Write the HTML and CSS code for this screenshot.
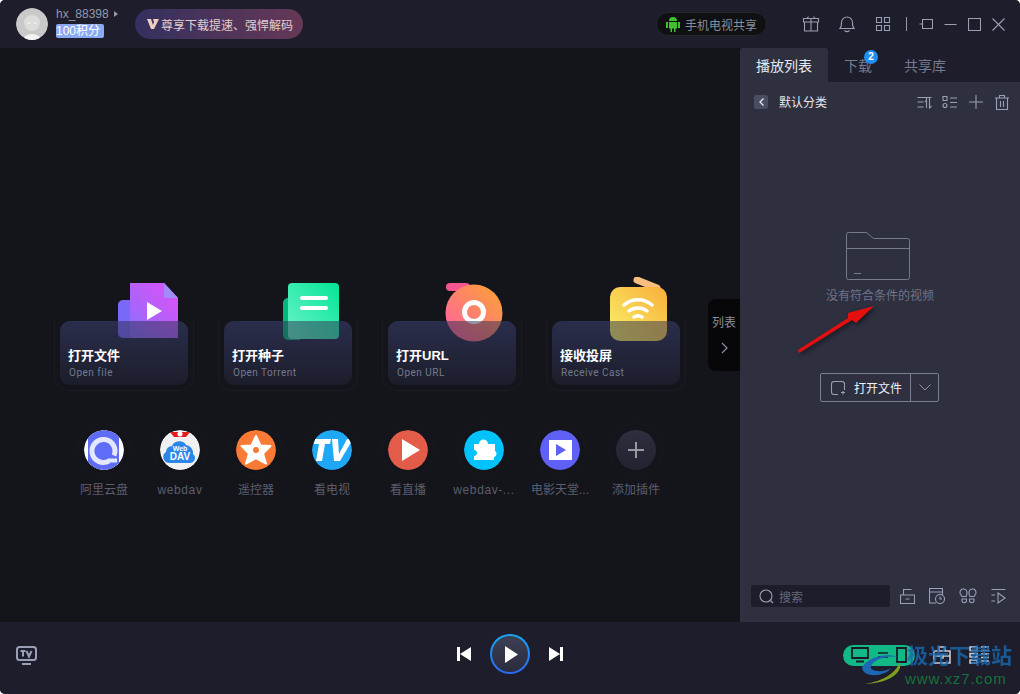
FILE: index.html
```html
<!DOCTYPE html>
<html lang="zh">
<head>
<meta charset="utf-8">
<title>Player</title>
<link rel="stylesheet" href="styles.css">
</head>
<body>
<div class="app">
  <header class="topbar">
    <div class="avatar">
      <svg viewBox="0 0 32 32" width="32" height="32"><circle cx="16" cy="16" r="16" fill="#c9c9c9"/><circle cx="16" cy="15" r="8" fill="#dcdcdc"/><ellipse cx="16" cy="32" rx="9" ry="6" fill="#f4f4f4"/><circle cx="13" cy="15" r="1" fill="#f6f6f6"/><circle cx="19" cy="15" r="1" fill="#f6f6f6"/></svg>
    </div>
    <div class="user">
      <div class="user-name">hx_88398<span class="caret"></span></div>
      <div class="points">100积分</div>
    </div>
    <div class="vip"><svg width="12" height="10" viewBox="0 0 12 10"><path d="M0 0h4l2 6 1-3-1-3h6L7 10H4z" fill="#f0cfc0"/></svg><span>尊享下载提速、强悍解码</span></div>
    <div class="spacer"></div>
    <div class="share">
      <svg width="14" height="16" viewBox="0 0 14 16"><path d="M3 5a4 4 0 0 1 8 0zM3 6h8v6.500H9.500V16h-1.500v-3.500H6V16H4.500v-3.500H3zM0 6h2v6H0zM12 6h2v6h-2z" fill="#3fc22e"/></svg>
      <span>手机电视共享</span>
    </div>
    <div class="win-icons">
      <svg class="ic" width="18" height="18" viewBox="0 0 18 18"><path d="M1.500 3.500h15v3.500h-15zM2.500 7v9h13V7M9 3.500V16M5 3.500 6.500 1.500M13 3.500 11.500 1.500" /></svg>
      <svg class="ic gap-bell" width="18" height="18" viewBox="0 0 18 18"><path d="M2 13.500c1.500-1.500 1.500-3 1.500-6a5.500 5.500 0 0 1 11 0c0 3 0 4.500 1.500 6zM6.500 15.500c1.500 1.500 3.500 1.500 5 0"/></svg>
      <svg class="ic gap-grid" width="16" height="16" viewBox="0 0 16 16"><path d="M1.500 1.500h5v5h-5zM9.500 1.500h5v5h-5zM1.500 9.500h5v5h-5zM9.500 9.500h5v5h-5z"/></svg>
      <span class="sep"></span>
      <svg class="ic gap-pin" width="14" height="14" viewBox="0 0 14 14"><path d="M.5 7h3M3.500 2.500h10v9h-10z"/></svg>
      <svg class="ic" width="13" height="13" viewBox="0 0 13 13"><path d="M.5 6.500h12"/></svg>
      <svg class="ic" width="13" height="13" viewBox="0 0 13 13"><path d="M.5.500h12v12H.5z"/></svg>
      <svg class="ic" width="13" height="13" viewBox="0 0 13 13"><path d="M.5.500l12 12M12.500.500l-12 12"/></svg>
    </div>
  </header>

  <div class="middle">
    <main class="stage">
      <div class="cards">
        <div class="card-wrap"><div class="card">
          <svg class="card-art" width="62" height="58" viewBox="0 0 62 58"><defs><linearGradient id="g1" x1="0" y1="1" x2="1" y2="0"><stop offset="0" stop-color="#8a70ff"/><stop offset="1" stop-color="#e24ff5"/></linearGradient></defs><path d="M5 18h15v38H5a5 5 0 0 1-5-5V23a5 5 0 0 1 5-5z" fill="#7a68f6"/><path d="M12 1h34l14 15v40H12z" fill="url(#g1)"/><path d="M46 1l14 15H48a2 2 0 0 1-2-2z" fill="#a08cf8"/><path d="M29 20l15 9-15 9z" fill="#fff"/></svg>
          <div class="card-glass"></div>
          <div class="card-title">打开文件</div><div class="card-sub">Open file</div>
        </div></div>
        <div class="card-wrap"><div class="card">
          <svg class="card-art art2" width="58" height="60" viewBox="0 0 58 60"><defs><linearGradient id="g2" x1="0" y1="1" x2="1" y2="0"><stop offset="0" stop-color="#6df3cd"/><stop offset="1" stop-color="#04e594"/></linearGradient></defs><path d="M6 16h12v42H6a5 5 0 0 1-5-5V21a5 5 0 0 1 5-5z" fill="#04b87c"/><rect x="6" y="1" width="51" height="56" rx="4" fill="url(#g2)"/><rect x="18" y="14" width="28" height="4" rx="2" fill="#fff"/><rect x="18" y="24" width="28" height="4" rx="2" fill="#fff"/></svg>
          <div class="card-glass"></div>
          <div class="card-title">打开种子</div><div class="card-sub">Open Torrent</div>
        </div></div>
        <div class="card-wrap"><div class="card">
          <svg class="card-art art3" width="58" height="60" viewBox="0 0 58 60"><defs><linearGradient id="g3" x1="0" y1="1" x2="1" y2="0"><stop offset="0" stop-color="#ff5fa8"/><stop offset="1" stop-color="#fba52e"/></linearGradient></defs><rect x="1" y="1" width="24" height="8" rx="4" fill="#f4568f"/><circle cx="29" cy="31" r="28.500" fill="url(#g3)"/><circle cx="29" cy="30" r="9.500" fill="none" stroke="#fff" stroke-width="5"/></svg>
          <div class="card-glass"></div>
          <div class="card-title">打开URL</div><div class="card-sub">Open URL</div>
        </div></div>
        <div class="card-wrap"><div class="card">
          <svg class="card-art art4" width="58" height="64" viewBox="0 0 58 64"><defs><linearGradient id="g4" x1="0" y1="1" x2="1" y2="0"><stop offset="0" stop-color="#f8f268"/><stop offset="1" stop-color="#f9ae3c"/></linearGradient></defs><path d="M28 3l20 8" stroke="#f9bd7d" stroke-width="7" stroke-linecap="round"/><rect x="1" y="10" width="57" height="54" rx="10" fill="url(#g4)"/><g fill="none" stroke="#fff" stroke-width="3.500" stroke-linecap="round"><path d="M15 28c8-7 20-7 28 0"/><path d="M20 34c5-4 13-4 18 0"/><path d="M25 40c3-2 5-2 8 0"/></g></svg>
          <div class="card-glass"></div>
          <div class="card-title">接收投屏</div><div class="card-sub">Receive Cast</div>
        </div></div>
      </div>

      <div class="plugins">
        <div class="plugin"><div class="ring"><svg width="40" height="40" viewBox="0 0 40 40"><circle cx="20" cy="20" r="20" fill="#fff"/><path d="M4 8a20 20 0 0 1 31-1v26a20 20 0 0 1-31-1z" fill="#5f6cf5"/><path d="M30 25.500a11.500 11.500 0 1 0-5 5.500" fill="none" stroke="#e3e7ff" stroke-width="5"/><path d="M24 30.500h9" stroke="#e3e7ff" stroke-width="4"/></svg></div><div class="plugin-name">阿里云盘</div></div>
        <div class="plugin"><div class="ring"><svg width="40" height="40" viewBox="0 0 40 40"><circle cx="20" cy="20" r="20" fill="#f1f1f1"/><path d="M10 2h20l-4 5H14z" fill="#e51c1c"/><circle cx="20" cy="4" r="2.500" fill="#fff"/><path d="M9 33a6 6 0 0 1-3-11 6 6 0 0 1 6-6c2-6 12-6 14-1a8 8 0 0 1 7 9 5 5 0 0 1-3 9z" fill="#2a86e8"/><text x="20" y="21" class="dav-s">Web</text><text x="20" y="30" class="dav-l">DAV</text></svg></div><div class="plugin-name">webdav</div></div>
        <div class="plugin"><div class="ring"><svg width="40" height="40" viewBox="0 0 40 40"><circle cx="20" cy="20" r="20" fill="#f97a35"/><path d="M20 6l4.500 9.500 10 .5-7.500 7.500 3 10-10-5.500-10 5.500 3-10-7.500-7.500 10-.5z" fill="#fff" stroke="#fff" stroke-width="2" stroke-linejoin="round"/><circle cx="20" cy="20" r="3" fill="#f97a35"/></svg></div><div class="plugin-name">遥控器</div></div>
        <div class="plugin"><div class="ring"><svg width="40" height="40" viewBox="0 0 40 40"><circle cx="20" cy="20" r="20" fill="#1ea8f5"/><path d="M3 9h16l-1 5h-5l-3 17H4l3-17H2zM20 9h6l1 15 8-15h6L28 31h-6z" fill="#fff"/></svg></div><div class="plugin-name">看电视</div></div>
        <div class="plugin"><div class="ring"><svg width="40" height="40" viewBox="0 0 40 40"><circle cx="20" cy="20" r="20" fill="#e35c4a"/><path d="M14 9l18 11-18 11z" fill="#fff"/></svg></div><div class="plugin-name">看直播</div></div>
        <div class="plugin"><div class="ring"><svg width="40" height="40" viewBox="0 0 40 40"><circle cx="20" cy="20" r="20" fill="#00c3fb"/><path d="M10 14h5c0-6 9-6 9 0h7v7c3 2 1 6-1 6v3H10v-4c4 0 4-6 0-6z" fill="#fff"/></svg></div><div class="plugin-name">webdav-...</div></div>
        <div class="plugin"><div class="ring"><svg width="40" height="40" viewBox="0 0 40 40"><circle cx="20" cy="20" r="20" fill="#5f60f6"/><rect x="9" y="10" width="23" height="20" fill="#fff"/><path d="M16 14l10 6-10 6z" fill="#5f60f6"/></svg></div><div class="plugin-name">电影天堂...</div></div>
        <div class="plugin"><div class="ring add"><svg width="16" height="16" viewBox="0 0 16 16"><path d="M8 0v16M0 8h16" stroke="#9a9aa2" stroke-width="2"/></svg></div><div class="plugin-name">添加插件</div></div>
      </div>

      <div class="list-handle"><span>列表</span><svg width="7" height="12" viewBox="0 0 7 12"><path d="M1 1l5 5-5 5" fill="none" stroke="#8b90a6" stroke-width="1.200"/></svg></div>
    </main>

    <aside class="panel">
      <nav class="tabs">
        <div class="tab active">播放列表</div>
        <div class="tab">下载<span class="badge">2</span></div>
        <div class="tab">共享库</div>
      </nav>
      <div class="panel-body">
        <div class="crumb">
          <span class="back"><svg width="5" height="8" viewBox="0 0 5 8"><path d="M4.500.500 1 4l3.500 3.500" fill="none" stroke="#e4e6ee" stroke-width="1.300"/></svg></span>
          <span class="crumb-title">默认分类</span>
          <span class="crumb-tools">
            <svg class="ic tool-first" width="15" height="15" viewBox="0 0 15 15"><path d="M.5 2.500h14M.5 7h6M.5 12h6M9.500 2.500V13M9.500 5 8 7M12.500 2.500V13l2-2"/></svg>
            <svg class="ic" width="15" height="15" viewBox="0 0 15 15"><path d="M1 1.500h4v4H1zM8 3h7M8 7.500h7M8 12h7"/><circle cx="3" cy="10.500" r="2"/></svg>
            <svg class="ic" width="14" height="14" viewBox="0 0 14 14"><path d="M7 0v14M0 7h14"/></svg>
            <svg class="ic" width="14" height="15" viewBox="0 0 14 15"><path d="M0 3h14M4.500 3V.500h5V3M1.500 3v11.500h11V3M5.500 6v6M8.500 6v6"/></svg>
          </span>
        </div>
        <div class="empty">
          <svg class="folder" width="64" height="48" viewBox="0 0 64 48"><path d="M.5 10V2.500a2 2 0 0 1 2-2h18l7 6h34a2 2 0 0 1 2 2V45.500a2 2 0 0 1-2 2H2.500a2 2 0 0 1-2-2zM.5 16.500h63M8 41.500h7"/></svg>
          <p class="empty-text">没有符合条件的视频</p>
          <div class="open-btn">
            <span class="open-main"><svg class="ic" width="14" height="14" viewBox="0 0 14 14"><path d="M7 13.500H3a2.500 2.500 0 0 1-2.500-2.500V3A2.500 2.500 0 0 1 3 .500h8A2.500 2.500 0 0 1 13.500 3v6M10 11.500h4M12 10v3.500"/></svg>打开文件</span>
            <span class="open-more"><svg width="12" height="7" viewBox="0 0 12 7"><path d="M.5.500 6 6 11.500.500" fill="none" stroke="#9296a8"/></svg></span>
          </div>
        </div>
        <div class="panel-foot">
          <div class="search"><svg class="ic" width="15" height="15" viewBox="0 0 15 15"><circle cx="7" cy="7" r="6"/><path d="M11 11l3 3"/></svg><span>搜索</span></div>
          <div class="foot-tools">
            <svg class="ic" width="15" height="16" viewBox="0 0 15 16"><path d="M.5 7h14v8.500H.5zM3.500 7V1.500h8M5.500 11h4"/></svg>
            <svg class="ic" width="16" height="16" viewBox="0 0 16 16"><path d="M7 15H.5V.500h13V7M.5 4h13"/><circle cx="11" cy="11" r="4.500"/><path d="M11 8.500V11h2"/></svg>
            <svg class="ic" width="18" height="17" viewBox="0 0 18 17"><path d="M4.500 1c3 0 3.500 2 3.500 4 0 1.500-.5 2-1 3.500H3C2.500 7 1 6.500 1 5c0-2 .5-4 3.500-4zM13.500 1c-3 0-3.500 2-3.500 4 0 1.500.5 2 1 3.500h4c.5-1.500 2-2 2-3.500 0-2-.5-4-3.500-4zM3 11h4.500v1.500c0 3-4.500 3-4.500 0zM10.500 11H15v1.500c0 3-4.500 3-4.500 0z"/></svg>
            <svg class="ic" width="15" height="16" viewBox="0 0 15 16"><path d="M.5 1.500h14M.5 7H4M.5 13H4M7 5l7 5-7 5z"/></svg>
          </div>
        </div>
      </div>
    </aside>
  </div>

  <footer class="bottombar">
    <svg class="ic tv" width="21" height="19" viewBox="0 0 21 19"><rect x="1" y="1" width="19" height="13" rx="2.500"/><path d="M6 18h9"/><path d="M4.500 5h5M7 5v5.500M10.500 5l2.500 5.500L15.500 5"/></svg>
    <div class="transport">
      <svg width="14" height="14" viewBox="0 0 14 14"><path d="M0 0h3v14H0zM14 0v14L3 7z" fill="#fff"/></svg>
      <div class="play"><svg width="13" height="17" viewBox="0 0 13 17"><path d="M0 0l13 8.500L0 17z" fill="#fff"/></svg></div>
      <svg width="14" height="14" viewBox="0 0 14 14"><path d="M11 0h3v14h-3zM0 0v14l11-7z" fill="#fff"/></svg>
    </div>
    <div class="bottom-right">
      <div class="pill">
        <svg width="18" height="16" viewBox="0 0 18 16"><path d="M1 1h16v10H1zM5 14.500h8" fill="none" stroke="#1a1a26" stroke-width="1.800"/></svg>
        <svg width="10" height="10" viewBox="0 0 10 10"><path d="M0 3h10M0 7h10" stroke="#1a1a26" stroke-width="1.500"/></svg>
        <svg width="11" height="16" viewBox="0 0 11 16"><path d="M1 1h9v14H1z" fill="none" stroke="#1a1a26" stroke-width="1.800"/></svg>
      </div>
      <svg class="ic light" width="18" height="18" viewBox="0 0 18 18"><path d="M1 5h16v12H1zM6 5V1h6v4M1 10h16M8 9h2v3H8z"/></svg>
      <svg class="ic light" width="21" height="18" viewBox="0 0 21 18"><path d="M1 1h7v3.500H1zM1 7.500h7V11H1zM1 14h7v3H1zM12 1h8M12 4.500h8M12 8h8M12 11.500h8M12 15h8"/></svg>
    </div>
  </footer>

  <svg class="arrow" width="80" height="54" viewBox="0 0 80 54"><path d="M1 49 51 17 51 12 77 5 59 22 55 19 2 52z" fill="#e60f0f"/></svg>
  <div class="watermark">
    <svg class="wm-logo" width="44" height="30" viewBox="0 0 44 30"><path d="M2 14C6 4 26-2 38 3 28 1 14 5 11 12c-2 6 12 7 20 2-5 8-27 11-29 0z" fill="#1c68b4"/><path d="M5 30c14-2 30-9 35-22 3 11-11 21-35 22z" fill="#7ea01c"/></svg>
    <div class="wm-cn">极光下载站</div>
    <div class="wm-en">www.xz7.com</div>
  </div>
</div>
</body>
</html>
```
FILE: styles.css
```css
* { box-sizing: border-box; }
html, body { margin: 0; height: 100%; background: #fff; overflow: hidden; }
body { font-family: "Liberation Sans", "Noto Sans CJK SC", sans-serif; }
.app { position: relative; width: 1020px; height: 694px; display: flex; flex-direction: column; background: #1d1d2b; border-radius: 5px; overflow: hidden; color: #9296a8; }
.ic { fill: none; stroke: #9a9fb5; stroke-width: 1.100; flex: none; }
.ic.light { stroke: #c9cdd9; stroke-width: 1.600; }
.ic.tv { stroke: #9a9fb5; stroke-width: 2; margin-top: -5px; }

/* top bar */
.topbar { height: 48px; flex: none; display: flex; align-items: center; padding: 0 15px 0 16px; background: #1d1d2b; }
.avatar { width: 32px; height: 32px; border-radius: 50%; overflow: hidden; flex: none; }
.user { margin: -3px 0 0 8px; width: 79px; display: flex; flex-direction: column; gap: 3px; }
.user-name { font-size: 12px; line-height: 14px; color: #9398ac; display: flex; align-items: center; gap: 5px; }
.caret { width: 0; height: 0; border-left: 4px solid #9398ac; border-top: 3.500px solid transparent; border-bottom: 3.500px solid transparent; }
.points { align-self: flex-start; font-size: 12px; line-height: 14px; height: 14px; width: 48px; background: #8ba8f2; color: #fff; border-radius: 2px; white-space: nowrap; }
.vip { height: 30px; width: 168px; border-radius: 15px; background: linear-gradient(90deg, #34305f, #663856); display: flex; align-items: center; padding-left: 12px; gap: 2px; font-size: 12px; color: #e4cfcf; white-space: nowrap; }
.spacer { flex: 1; }
.share { width: 111px; height: 24px; border-radius: 12px; background: #0f1012; border: 1px solid #26272e; display: flex; align-items: center; padding-left: 9px; gap: 5px; font-size: 12px; color: #8a8d9a; white-space: nowrap; margin-right: 35px; }
.win-icons { display: flex; align-items: center; gap: 11px; }
.gap-bell { margin-left: 7px; }
.gap-grid { margin-left: 8px; }
.gap-pin { margin-left: 1px; }
.sep { width: 1px; height: 14px; background: #9398ac; margin-left: 4px; }

/* middle */
.middle { flex: 1; display: flex; min-height: 0; }
.stage { position: relative; width: 740px; background: #14141b; display: flex; flex-direction: column; align-items: flex-start; padding: 272px 0 0 54px; }
.cards { display: flex; gap: 24px; }
.card-wrap { width: 140px; height: 71px; padding: 0 6px; border: 1px solid #1b1b23; border-top-color: transparent; border-radius: 0 0 14px 14px; }
.card { position: relative; margin-left: -1px; width: 128px; height: 64px; border-radius: 10px; background: linear-gradient(180deg, #2a2e4c, #1c1d2b); padding: 26px 0 0 8px; }
.card-art { position: absolute; left: 58px; top: -39px; }
.art2 { left: 58px; top: -39px; }
.art3 { left: 57px; top: -39px; }
.art4 { left: 57px; top: -44px; }
.card-glass { position: absolute; inset: 0; border-radius: 10px; background: linear-gradient(180deg, rgba(42,46,76,.5), rgba(28,29,43,.5)); }
.card-title { position: relative; font-size: 13px; line-height: 17px; font-weight: 700; color: #fff; white-space: nowrap; }
.card-sub { position: relative; margin: 3px 0 0 1px; font-family: Roboto, sans-serif; font-size: 10px; line-height: 12px; letter-spacing: .5px; color: #757a8e; white-space: nowrap; }

.plugins { display: flex; margin: 39px 0 0 12px; }
.plugin { width: 76px; display: flex; flex-direction: column; align-items: center; }
.ring { width: 40px; height: 40px; border-radius: 50%; overflow: hidden; box-shadow: 0 0 0 6px #14141b, 0 0 0 7px #191920; }
.ring.add { background: linear-gradient(180deg, #2d2f3f, #222330); display: flex; align-items: center; justify-content: center; }
.plugin-name { margin-top: 12px; font-size: 12px; line-height: 16px; color: #5b5f6d; white-space: nowrap; }
.plugin:nth-child(2) .plugin-name, .plugin:nth-child(6) .plugin-name { letter-spacing: .6px; }
.dav-s { font: 700 7px "Liberation Sans", sans-serif; fill: #fff; text-anchor: middle; }
.dav-l { font: 700 10px "Liberation Sans", sans-serif; fill: #fff; text-anchor: middle; }

.list-handle { position: absolute; right: 0; top: 251px; width: 32px; height: 72px; border-radius: 8px 0 0 8px; background: #07070a; display: flex; flex-direction: column; align-items: center; padding-top: 16px; gap: 11px; font-size: 12px; line-height: 16px; color: #8a8d97; }
.list-handle span { white-space: nowrap; }

/* panel */
.panel { width: 280px; flex: none; display: flex; flex-direction: column; background: #1d1d2b; }
.tabs { height: 34px; flex: none; display: flex; font-size: 14px; color: #767a8c; }
.tab { position: relative; display: flex; align-items: center; justify-content: center; height: 34px; white-space: nowrap; }
.tab:nth-child(1) { width: 88px; }
.tab:nth-child(2) { width: 60px; }
.tab:nth-child(3) { width: 74px; }
.tab.active { background: #2e3040; color: #e8e9ef; border-radius: 3px 3px 0 0; }
.badge { position: absolute; left: 36px; top: 2px; width: 14px; height: 14px; border-radius: 50%; background: #1f8ff5; color: #fff; font-size: 10px; font-weight: 700; line-height: 14px; text-align: center; }
.panel-body { flex: 1; background: #2e3040; display: flex; flex-direction: column; min-height: 0; }
.crumb { height: 40px; flex: none; display: flex; align-items: center; padding: 0 11px 0 14px; }
.back { width: 14px; height: 14px; border-radius: 2px; background: #4a4d60; display: flex; align-items: center; justify-content: center; flex: none; }
.crumb-title { margin: -2px 0 0 11px; font-size: 12px; color: #e4e6ee; white-space: nowrap; }
.crumb-tools { margin-left: auto; display: flex; align-items: center; gap: 12px; }
.tool-first { margin-right: -2px; }
.empty { flex: 1; display: flex; flex-direction: column; align-items: center; padding-top: 110px; min-height: 0; }
.folder { fill: none; stroke: #757a8f; stroke-width: 1; display: block; margin-right: 4px; }
.empty-text { margin: 8px 0 0; font-size: 12px; line-height: 16px; color: #6e7387; white-space: nowrap; }
.open-btn { margin: 69px 1px 0 0; width: 119px; height: 29px; border: 1px solid #7b7f93; border-radius: 2px; display: flex; font-size: 12px; color: #f0f1f5; }
.open-main { width: 90px; display: flex; align-items: center; gap: 9px; padding-left: 10px; border-right: 1px solid #7b7f93; white-space: nowrap; }
.open-more { flex: 1; display: flex; align-items: center; justify-content: center; }
.panel-foot { height: 44px; flex: none; display: flex; align-items: center; padding: 0 14px 8px 11px; }
.search { width: 139px; height: 22px; background: #1d1d2b; border-radius: 2px; display: flex; align-items: center; gap: 5px; padding-left: 8px; font-size: 12px; color: #656a7c; }
.foot-tools { margin-left: auto; display: flex; align-items: center; gap: 14px; }

/* bottom */
.bottombar { height: 72px; flex: none; display: flex; align-items: center; padding: 0 16px; position: relative; background: #1d1d2b; }
.transport { position: absolute; left: 457px; top: 12px; display: flex; align-items: center; gap: 19px; }
.play { width: 40px; height: 40px; border-radius: 50%; border: 2.500px solid transparent; background: linear-gradient(180deg, #3d3f55, #2a2b3c) padding-box, linear-gradient(180deg, #16a9f2, #2b68ef) border-box; display: flex; align-items: center; justify-content: center; padding-left: 3px; }
.bottom-right { display: flex; align-items: center; gap: 18px; margin: -6px 14px 0 auto; }
.pill { width: 72px; height: 21px; border-radius: 11px; background: #12b886; display: flex; align-items: center; justify-content: space-between; padding: 0 8px; }

/* overlays */
.arrow { position: absolute; left: 797px; top: 301px; filter: drop-shadow(2px 2px 2px rgba(0, 0, 0, .5)); }
.watermark { position: absolute; left: 860px; top: 644px; width: 160px; height: 48px; }
.wm-logo { position: absolute; left: 0; top: 10px; }
.wm-cn { position: absolute; left: 47px; top: -3px; font-size: 21px; line-height: 30px; color: #1a68ad; font-weight: 700; white-space: nowrap; opacity: .8; }
.wm-en { position: absolute; left: 45px; top: 26px; font-size: 15px; line-height: 18px; letter-spacing: .9px; color: #17713a; white-space: nowrap; }
```
